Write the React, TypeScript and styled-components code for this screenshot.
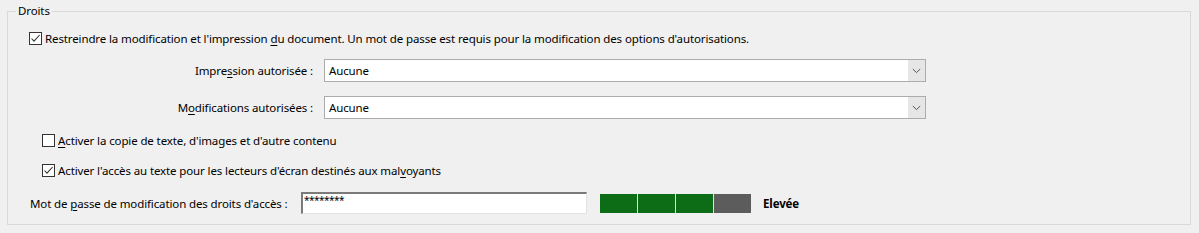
import React from 'react';
import styled, { createGlobalStyle } from 'styled-components';

const GlobalStyle = createGlobalStyle`
  html, body {
    margin: 0;
    padding: 0;
    background: #f0f0f0;
  }
  body {
    font-family: "Noto Sans", "Liberation Sans", Arial, sans-serif;
    font-size: 11.5px;
    letter-spacing: -0.12px;
    color: #000000;
  }
`;

const Page = styled.div`
  width: 1199px;
  height: 233px;
  padding: 3px 0 0 7px;
  box-sizing: border-box;
`;

const Group = styled.fieldset`
  margin: 0;
  width: 1184px;
  height: 222px;
  box-sizing: border-box;
  border: 1px solid #d9d9d9;
  padding: 0;
  display: flex;
  flex-direction: column;
`;

const Legend = styled.legend`
  margin-left: 8px;
  padding: 0 2px;
  line-height: 16px;
`;

const Row = styled.div<{ $top: number; $indent: number; $height?: number }>`
  display: flex;
  align-items: center;
  margin-top: ${(p) => p.$top}px;
  padding-left: ${(p) => p.$indent}px;
  height: ${(p) => p.$height ?? 20}px;
`;

const Box = styled.span`
  width: 13px;
  height: 13px;
  box-sizing: border-box;
  border: 1px solid #333333;
  background: #ffffff;
  display: inline-flex;
  align-items: center;
  justify-content: center;
  margin-right: 3px;
  flex: none;
`;

const Text = styled.span`
  white-space: nowrap;
`;

const Key = styled.u`
  text-underline-offset: 2px;
`;

const FieldLabel = styled.span<{ $width: number; $align?: string }>`
  width: ${(p) => p.$width}px;
  text-align: ${(p) => p.$align ?? 'left'};
  white-space: nowrap;
  flex: none;
`;

const Select = styled.div`
  margin-left: 11px;
  width: 602px;
  height: 23px;
  box-sizing: border-box;
  border: 1px solid #acacac;
  display: flex;
  background: #ffffff;
`;

const SelectValue = styled.span`
  flex: 1;
  padding-left: 4px;
  display: flex;
  align-items: center;
`;

const SelectArrow = styled.span`
  width: 17px;
  background: #e6e6e6;
  display: flex;
  align-items: center;
  justify-content: center;
`;

const Input = styled.div`
  width: 286px;
  height: 22px;
  box-sizing: border-box;
  background: #ffffff;
  border-top: 2px solid #7a7a7a;
  border-left: 2px solid #7a7a7a;
  border-right: 1px solid #e3e3e3;
  border-bottom: 1px solid #e3e3e3;
  padding: 1px 0 0 1px;
  font-size: 10px;
  line-height: 10px;
  letter-spacing: -0.5px;
  flex: none;
`;

const Meter = styled.div`
  margin-left: 13px;
  display: flex;
  gap: 1px;
  background: #e0e0e0;
`;

const Segment = styled.span<{ $on: boolean }>`
  width: 37px;
  height: 19px;
  background: ${(p) => (p.$on ? '#0d6d16' : '#5c5c5c')};
`;

const Strength = styled.span`
  margin-left: 12px;
  font-weight: 700;
`;

function CheckBox({ checked }: { checked: boolean }) {
  return (
    <Box>
      {checked && (
        <svg width="11" height="11" viewBox="0 0 11 11">
          <path d="M1.5 5.5 L4 8.2 L9.6 2" fill="none" stroke="#333333" strokeWidth="1.1" />
        </svg>
      )}
    </Box>
  );
}

function Chevron() {
  return (
    <svg width="9" height="6" viewBox="0 0 9 6">
      <path d="M0.8 1 L4.5 4.6 L8.2 1" fill="none" stroke="#555555" strokeWidth="1" />
    </svg>
  );
}

export default function App() {
  const level = 3;
  return (
    <Page>
      <GlobalStyle />
      <Group>
        <Legend>Droits</Legend>
        <Row $top={9} $indent={21}>
          <CheckBox checked />
          <Text>
            Restreindre la modification et l'impression <Key>d</Key>u document. Un mot de passe est requis pour la modification des options d'autorisations.
          </Text>
        </Row>
        <Row $top={11} $indent={0} $height={23}>
          <FieldLabel $width={305} $align="right">
            Impre<Key>s</Key>sion autorisée :
          </FieldLabel>
          <Select>
            <SelectValue>Aucune</SelectValue>
            <SelectArrow>
              <Chevron />
            </SelectArrow>
          </Select>
        </Row>
        <Row $top={14} $indent={0} $height={23}>
          <FieldLabel $width={305} $align="right">
            M<Key>o</Key>difications autorisées :
          </FieldLabel>
          <Select>
            <SelectValue>Aucune</SelectValue>
            <SelectArrow>
              <Chevron />
            </SelectArrow>
          </Select>
        </Row>
        <Row $top={11} $indent={34}>
          <CheckBox checked={false} />
          <Text>
            <Key>A</Key>ctiver la copie de texte, d'images et d'autre contenu
          </Text>
        </Row>
        <Row $top={10} $indent={34}>
          <CheckBox checked />
          <Text>
            Activer l'accès au texte pour les lecteurs d'écran destinés aux mal<Key>v</Key>oyants
          </Text>
        </Row>
        <Row $top={12} $indent={22} $height={22}>
          <FieldLabel $width={271}>
            Mot de <Key>p</Key>asse de modification des droits d'accès :
          </FieldLabel>
          <Input>********</Input>
          <Meter>
            {[0, 1, 2, 3].map((i) => (
              <Segment key={i} $on={i < level} />
            ))}
          </Meter>
          <Strength>Elevée</Strength>
        </Row>
      </Group>
    </Page>
  );
}
